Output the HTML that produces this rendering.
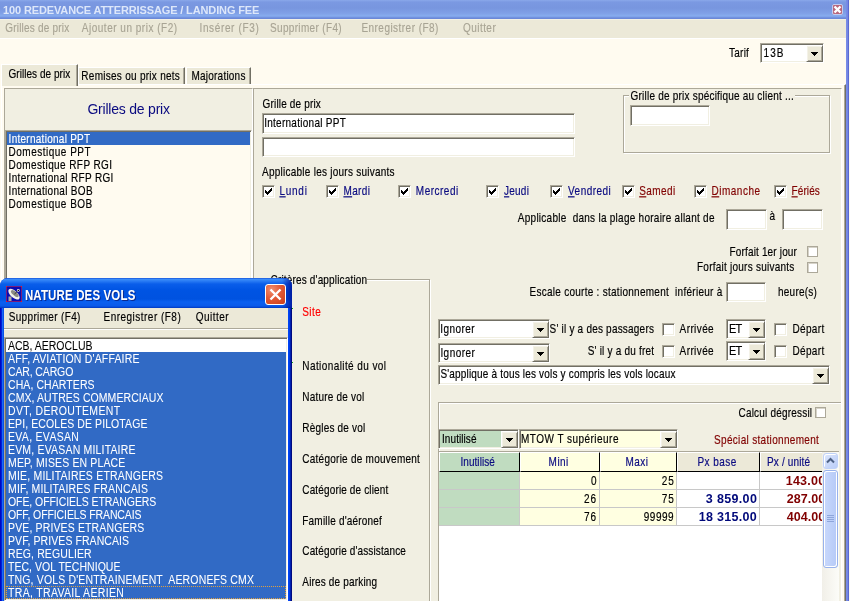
<!DOCTYPE html><html><head><meta charset="utf-8"><style>*{margin:0;padding:0;box-sizing:border-box}
html,body{width:850px;height:601px;overflow:hidden;background:#FFFBF0;position:relative;font-family:"Liberation Sans",sans-serif}
.a{position:absolute}
.sk{position:absolute;border:1px solid;border-color:#ACA899 #FFFFFF #FFFFFF #ACA899;box-shadow:inset 1px 1px 0 #716F64,inset -1px -1px 0 #F1EFE2}
.btn{position:absolute;background:#ECE9D8;border:1px solid;border-color:#FFFFFF #716F64 #716F64 #FFFFFF;box-shadow:inset 1px 1px 0 #F4F2E8,inset -1px -1px 0 #ACA899}
.cb{position:absolute;width:13px;height:13px;background:#fff;border:1px solid;border-color:#ACA899 #FFFFFF #FFFFFF #ACA899;box-shadow:inset 1px 1px 0 #716F64,inset -1px -1px 0 #F1EFE2}
</style></head><body><div style="position:absolute;left:0;top:0;width:850px;height:601px;overflow:hidden;will-change:transform">
<div class="a" style="left:0px;top:0px;width:850px;height:19px;background:linear-gradient(#8AA8EA 0,#7B99E2 2px,#7896DF 8px,#7F9FE6 13px,#87ACEE 16px,#7A9CE6 17px,#6B88D8 18px,#6B88D8 19px)"></div>
<div style="position:absolute;left:3.00px;top:4px;white-space:pre;font:bold 11px/13px 'Liberation Sans',sans-serif;color:#DDE7FA;letter-spacing:-0.128px;-webkit-text-stroke:0.0px #DDE7FA;">100 REDEVANCE ATTERRISSAGE / LANDING FEE</div>
<div class="a" style="left:832px;top:4px;width:11px;height:11px;background:#B8667C;border:1px solid #C4CCEE;border-radius:2px"></div>
<svg class="a" style="left:832px;top:4px" width="11" height="11"><path d="M2.5 2.5L8.5 8.5M8.5 2.5L2.5 8.5" stroke="#fff" stroke-width="2.4"/></svg>
<div class="a" style="left:0px;top:19px;width:846px;height:19px;background:#ECE9D8;border-top:1px solid #F3F0E4"></div>
<div class="a" style="left:0px;top:38px;width:846px;height:1px;background:#FFFFFF"></div>
<div style="position:absolute;left:5.30px;top:22px;white-space:pre;font:10px/13px 'Liberation Sans',sans-serif;color:#A8A494;letter-spacing:0.193px;-webkit-text-stroke:0.12px #A8A494;;transform:scaleY(1.22);transform-origin:0 10px">Grilles de prix</div>
<div style="position:absolute;left:81.80px;top:22px;white-space:pre;font:10px/13px 'Liberation Sans',sans-serif;color:#A8A494;letter-spacing:0.511px;-webkit-text-stroke:0.12px #A8A494;;transform:scaleY(1.22);transform-origin:0 10px">Ajouter un prix (F2)</div>
<div style="position:absolute;left:199.50px;top:22px;white-space:pre;font:10px/13px 'Liberation Sans',sans-serif;color:#A8A494;letter-spacing:0.636px;-webkit-text-stroke:0.12px #A8A494;;transform:scaleY(1.22);transform-origin:0 10px">Insérer (F3)</div>
<div style="position:absolute;left:270.00px;top:22px;white-space:pre;font:10px/13px 'Liberation Sans',sans-serif;color:#A8A494;letter-spacing:0.338px;-webkit-text-stroke:0.12px #A8A494;;transform:scaleY(1.22);transform-origin:0 10px">Supprimer (F4)</div>
<div style="position:absolute;left:361.40px;top:22px;white-space:pre;font:10px/13px 'Liberation Sans',sans-serif;color:#A8A494;letter-spacing:0.467px;-webkit-text-stroke:0.12px #A8A494;;transform:scaleY(1.22);transform-origin:0 10px">Enregistrer (F8)</div>
<div style="position:absolute;left:463.00px;top:22px;white-space:pre;font:10px/13px 'Liberation Sans',sans-serif;color:#A8A494;letter-spacing:0.450px;-webkit-text-stroke:0.12px #A8A494;;transform:scaleY(1.22);transform-origin:0 10px">Quitter</div>
<div class="a" style="left:846px;top:0px;width:3px;height:601px;background:linear-gradient(90deg,#7C8DE6,#7086E4 60%,#4D55C4)"></div>
<div class="a" style="left:849px;top:0px;width:1px;height:601px;background:#F8F7F2"></div>
<div style="position:absolute;left:729.00px;top:47px;white-space:pre;font:10px/13px 'Liberation Sans',sans-serif;color:#000;letter-spacing:0.250px;-webkit-text-stroke:0.15px #000;;transform:scaleY(1.22);transform-origin:0 10px">Tarif</div>
<div class="sk" style="left:760px;top:43px;width:64px;height:20px;background:#fff"></div>
<div style="position:absolute;left:763.60px;top:47px;white-space:pre;font:10px/13px 'Liberation Sans',sans-serif;color:#000;letter-spacing:1.000px;-webkit-text-stroke:0.15px #000;;transform:scaleY(1.22);transform-origin:0 10px">13B</div>
<div class="btn" style="left:806px;top:45px;width:17px;height:17px"></div>
<svg class="a" style="left:811px;top:52px" width="7" height="4"><path d="M0 0h7v1h-1v1h-1v1h-1v1h-1v-1h-1v-1h-1v-1h-1z" fill="#000"/></svg>
<div class="a" style="left:1px;top:84px;width:845px;height:517px;background:#FFFBF0;border-left:1px solid #fff;border-top:1px solid #fff;border-right:1px solid #716F64;box-shadow:inset -1px 0 0 #ACA899"></div>
<div class="a" style="left:78px;top:67px;width:107px;height:17px;background:#ECE9D8;border-left:1px solid #fff;border-top:1px solid #fff;border-right:1px solid #716F64;box-shadow:inset -1px 0 0 #ACA899"></div>
<div class="a" style="left:186px;top:67px;width:65px;height:17px;background:#ECE9D8;border-left:1px solid #fff;border-top:1px solid #fff;border-right:1px solid #716F64;box-shadow:inset -1px 0 0 #ACA899"></div>
<div class="a" style="left:1px;top:64px;width:77px;height:22px;background:#ECE9D8;border-left:1px solid #fff;border-top:1px solid #fff;border-right:1px solid #716F64;box-shadow:inset -1px 0 0 #ACA899"></div>
<div style="position:absolute;left:8.50px;top:68px;white-space:pre;font:10px/13px 'Liberation Sans',sans-serif;color:#000;letter-spacing:0.043px;-webkit-text-stroke:0.15px #000;;transform:scaleY(1.22);transform-origin:0 10px">Grilles de prix</div>
<div style="position:absolute;left:81.30px;top:70px;white-space:pre;font:10px/13px 'Liberation Sans',sans-serif;color:#000;letter-spacing:0.274px;-webkit-text-stroke:0.15px #000;;transform:scaleY(1.22);transform-origin:0 10px">Remises ou prix nets</div>
<div style="position:absolute;left:191.50px;top:70px;white-space:pre;font:10px/13px 'Liberation Sans',sans-serif;color:#000;letter-spacing:0.220px;-webkit-text-stroke:0.15px #000;;transform:scaleY(1.22);transform-origin:0 10px">Majorations</div>
<div class="a" style="left:4px;top:88px;width:249px;height:513px;background:#F1EFE2;border-top:1px solid #ACA899;border-left:1px solid #ACA899;border-right:1px solid #fff"></div>
<div style="position:absolute;left:87.40px;top:101px;white-space:pre;font:14px/17px 'Liberation Sans',sans-serif;color:#0A0A80;letter-spacing:-0.214px;-webkit-text-stroke:0.0px #0A0A80;">Grilles de prix</div>
<div class="sk" style="left:5px;top:130px;width:247px;height:471px;background:#FFFBF0"></div>
<div class="a" style="left:7px;top:132px;width:243px;height:13px;background:#316AC5"></div>
<div style="position:absolute;left:8.60px;top:133px;white-space:pre;font:10px/13px 'Liberation Sans',sans-serif;color:#fff;letter-spacing:0.269px;-webkit-text-stroke:0.15px #fff;;transform:scaleY(1.22);transform-origin:0 10px">International PPT</div>
<div style="position:absolute;left:8.60px;top:146px;white-space:pre;font:10px/13px 'Liberation Sans',sans-serif;color:#000;letter-spacing:0.495px;-webkit-text-stroke:0.15px #000;;transform:scaleY(1.22);transform-origin:0 10px">Domestique PPT</div>
<div style="position:absolute;left:8.60px;top:159px;white-space:pre;font:10px/13px 'Liberation Sans',sans-serif;color:#000;letter-spacing:0.409px;-webkit-text-stroke:0.15px #000;;transform:scaleY(1.22);transform-origin:0 10px">Domestique RFP RGI</div>
<div style="position:absolute;left:8.60px;top:172px;white-space:pre;font:10px/13px 'Liberation Sans',sans-serif;color:#000;letter-spacing:0.330px;-webkit-text-stroke:0.15px #000;;transform:scaleY(1.22);transform-origin:0 10px">International RFP RGI</div>
<div style="position:absolute;left:8.60px;top:185px;white-space:pre;font:10px/13px 'Liberation Sans',sans-serif;color:#000;letter-spacing:0.317px;-webkit-text-stroke:0.15px #000;;transform:scaleY(1.22);transform-origin:0 10px">International BOB</div>
<div style="position:absolute;left:8.60px;top:198px;white-space:pre;font:10px/13px 'Liberation Sans',sans-serif;color:#000;letter-spacing:0.495px;-webkit-text-stroke:0.15px #000;;transform:scaleY(1.22);transform-origin:0 10px">Domestique BOB</div>
<div class="a" style="left:253px;top:88px;width:589px;height:513px;background:#F1EFE2;border-top:1px solid #ACA899;border-left:1px solid #ACA899;border-right:1px solid #fff"></div>
<div style="position:absolute;left:262.60px;top:98px;white-space:pre;font:10px/13px 'Liberation Sans',sans-serif;color:#000;letter-spacing:0.162px;-webkit-text-stroke:0.15px #000;;transform:scaleY(1.22);transform-origin:0 10px">Grille de prix</div>
<div class="sk" style="left:262px;top:113px;width:313px;height:21px;background:#fff"></div>
<div style="position:absolute;left:264.20px;top:117px;white-space:pre;font:10px/13px 'Liberation Sans',sans-serif;color:#000;letter-spacing:0.269px;-webkit-text-stroke:0.15px #000;;transform:scaleY(1.22);transform-origin:0 10px">International PPT</div>
<div class="sk" style="left:262px;top:137px;width:313px;height:20px;background:#fff"></div>
<div class="a" style="left:623px;top:95px;width:207px;height:58px;border:1px solid #ACA899;box-shadow:inset 1px 1px 0 #fff,1px 1px 0 #fff"></div>
<div class="a" style="left:629px;top:90px;width:166px;height:12px;background:#F1EFE2"></div>
<div style="position:absolute;left:630.60px;top:90px;white-space:pre;font:10px/13px 'Liberation Sans',sans-serif;color:#000;letter-spacing:0.211px;-webkit-text-stroke:0.15px #000;;transform:scaleY(1.22);transform-origin:0 10px">Grille de prix spécifique au client ...</div>
<div class="sk" style="left:630px;top:105px;width:80px;height:21px;background:#fff"></div>
<div style="position:absolute;left:262.00px;top:166px;white-space:pre;font:10px/13px 'Liberation Sans',sans-serif;color:#000;letter-spacing:0.250px;-webkit-text-stroke:0.15px #000;;transform:scaleY(1.22);transform-origin:0 10px">Applicable les jours suivants</div>
<div class="cb" style="left:262px;top:185px"></div>
<svg class="a" style="left:265px;top:188px" width="7" height="7"><path d="M0 2h1v1h1v1h1v-1h1v-1h1v-1h1v-1h1v3h-1v1h-1v1h-1v1h-1v1h-1v-1h-1v-1h-1v-1h-1z" fill="#000"/></svg>
<div style="position:absolute;left:279.40px;top:185px;white-space:pre;font:10px/13px 'Liberation Sans',sans-serif;color:#0A0A80;letter-spacing:0.750px;-webkit-text-stroke:0.15px #0A0A80;;transform:scaleY(1.22);transform-origin:0 10px"><span style="text-decoration:underline;text-underline-offset:1px">L</span>undi</div>
<div class="cb" style="left:326px;top:185px"></div>
<svg class="a" style="left:329px;top:188px" width="7" height="7"><path d="M0 2h1v1h1v1h1v-1h1v-1h1v-1h1v-1h1v3h-1v1h-1v1h-1v1h-1v1h-1v-1h-1v-1h-1v-1h-1z" fill="#000"/></svg>
<div style="position:absolute;left:343.40px;top:185px;white-space:pre;font:10px/13px 'Liberation Sans',sans-serif;color:#0A0A80;letter-spacing:0.400px;-webkit-text-stroke:0.15px #0A0A80;;transform:scaleY(1.22);transform-origin:0 10px"><span style="text-decoration:underline;text-underline-offset:1px">M</span>ardi</div>
<div class="cb" style="left:398px;top:185px"></div>
<svg class="a" style="left:401px;top:188px" width="7" height="7"><path d="M0 2h1v1h1v1h1v-1h1v-1h1v-1h1v-1h1v3h-1v1h-1v1h-1v1h-1v1h-1v-1h-1v-1h-1v-1h-1z" fill="#000"/></svg>
<div style="position:absolute;left:415.80px;top:185px;white-space:pre;font:10px/13px 'Liberation Sans',sans-serif;color:#0A0A80;letter-spacing:0.500px;-webkit-text-stroke:0.15px #0A0A80;;transform:scaleY(1.22);transform-origin:0 10px">Mercredi</div>
<div class="cb" style="left:486px;top:185px"></div>
<svg class="a" style="left:489px;top:188px" width="7" height="7"><path d="M0 2h1v1h1v1h1v-1h1v-1h1v-1h1v-1h1v3h-1v1h-1v1h-1v1h-1v1h-1v-1h-1v-1h-1v-1h-1z" fill="#000"/></svg>
<div style="position:absolute;left:504.00px;top:185px;white-space:pre;font:10px/13px 'Liberation Sans',sans-serif;color:#0A0A80;letter-spacing:0.250px;-webkit-text-stroke:0.15px #0A0A80;;transform:scaleY(1.22);transform-origin:0 10px"><span style="text-decoration:underline;text-underline-offset:1px">J</span>eudi</div>
<div class="cb" style="left:550px;top:185px"></div>
<svg class="a" style="left:553px;top:188px" width="7" height="7"><path d="M0 2h1v1h1v1h1v-1h1v-1h1v-1h1v-1h1v3h-1v1h-1v1h-1v1h-1v1h-1v-1h-1v-1h-1v-1h-1z" fill="#000"/></svg>
<div style="position:absolute;left:568.00px;top:185px;white-space:pre;font:10px/13px 'Liberation Sans',sans-serif;color:#0A0A80;letter-spacing:0.471px;-webkit-text-stroke:0.15px #0A0A80;;transform:scaleY(1.22);transform-origin:0 10px"><span style="text-decoration:underline;text-underline-offset:1px">V</span>endredi</div>
<div class="cb" style="left:622px;top:185px"></div>
<svg class="a" style="left:625px;top:188px" width="7" height="7"><path d="M0 2h1v1h1v1h1v-1h1v-1h1v-1h1v-1h1v3h-1v1h-1v1h-1v1h-1v1h-1v-1h-1v-1h-1v-1h-1z" fill="#000"/></svg>
<div style="position:absolute;left:639.20px;top:185px;white-space:pre;font:10px/13px 'Liberation Sans',sans-serif;color:#800000;letter-spacing:0.400px;-webkit-text-stroke:0.15px #800000;;transform:scaleY(1.22);transform-origin:0 10px"><span style="text-decoration:underline;text-underline-offset:1px">S</span>amedi</div>
<div class="cb" style="left:694px;top:185px"></div>
<svg class="a" style="left:697px;top:188px" width="7" height="7"><path d="M0 2h1v1h1v1h1v-1h1v-1h1v-1h1v-1h1v3h-1v1h-1v1h-1v1h-1v1h-1v-1h-1v-1h-1v-1h-1z" fill="#000"/></svg>
<div style="position:absolute;left:711.50px;top:185px;white-space:pre;font:10px/13px 'Liberation Sans',sans-serif;color:#800000;letter-spacing:0.500px;-webkit-text-stroke:0.15px #800000;;transform:scaleY(1.22);transform-origin:0 10px"><span style="text-decoration:underline;text-underline-offset:1px">D</span>imanche</div>
<div class="cb" style="left:774px;top:185px"></div>
<svg class="a" style="left:777px;top:188px" width="7" height="7"><path d="M0 2h1v1h1v1h1v-1h1v-1h1v-1h1v-1h1v3h-1v1h-1v1h-1v1h-1v1h-1v-1h-1v-1h-1v-1h-1z" fill="#000"/></svg>
<div style="position:absolute;left:791.50px;top:185px;white-space:pre;font:10px/13px 'Liberation Sans',sans-serif;color:#800000;letter-spacing:0.100px;-webkit-text-stroke:0.15px #800000;;transform:scaleY(1.22);transform-origin:0 10px"><span style="text-decoration:underline;text-underline-offset:1px">F</span>ériés</div>
<div style="position:absolute;left:517.80px;top:212px;white-space:pre;font:10px/13px 'Liberation Sans',sans-serif;color:#000;letter-spacing:0.262px;-webkit-text-stroke:0.15px #000;;transform:scaleY(1.22);transform-origin:0 10px">Applicable  dans la plage horaire allant de</div>
<div class="sk" style="left:726px;top:209px;width:41px;height:21px;background:#fff"></div>
<div style="position:absolute;left:769.40px;top:210px;white-space:pre;font:10px/13px 'Liberation Sans',sans-serif;color:#000;letter-spacing:0.000px;-webkit-text-stroke:0.15px #000;;transform:scaleY(1.22);transform-origin:0 10px">à</div>
<div class="sk" style="left:782px;top:209px;width:41px;height:21px;background:#fff"></div>
<div style="position:absolute;left:729.50px;top:246px;white-space:pre;font:10px/13px 'Liberation Sans',sans-serif;color:#000;letter-spacing:0.160px;-webkit-text-stroke:0.15px #000;;transform:scaleY(1.22);transform-origin:0 10px">Forfait 1er jour</div>
<div class="a" style="left:807px;top:246px;width:11px;height:11px;background:#fff;border:1px solid #ACA899;box-shadow:inset 1px 1px 0 #D6D3C8"></div>
<div style="position:absolute;left:697.00px;top:261px;white-space:pre;font:10px/13px 'Liberation Sans',sans-serif;color:#000;letter-spacing:0.238px;-webkit-text-stroke:0.15px #000;;transform:scaleY(1.22);transform-origin:0 10px">Forfait jours suivants</div>
<div class="a" style="left:807px;top:262px;width:11px;height:11px;background:#fff;border:1px solid #ACA899;box-shadow:inset 1px 1px 0 #D6D3C8"></div>
<div style="position:absolute;left:529.50px;top:286px;white-space:pre;font:10px/13px 'Liberation Sans',sans-serif;color:#000;letter-spacing:0.268px;-webkit-text-stroke:0.15px #000;;transform:scaleY(1.22);transform-origin:0 10px">Escale courte : stationnement  inférieur à</div>
<div class="sk" style="left:726px;top:282px;width:40px;height:20px;background:#fff"></div>
<div style="position:absolute;left:778.00px;top:286px;white-space:pre;font:10px/13px 'Liberation Sans',sans-serif;color:#000;letter-spacing:0.243px;-webkit-text-stroke:0.15px #000;;transform:scaleY(1.22);transform-origin:0 10px">heure(s)</div>
<div class="a" style="left:265px;top:279px;width:165px;height:330px;border:1px solid #ACA899;box-shadow:inset 1px 1px 0 #fff,1px 1px 0 #fff"></div>
<div class="a" style="left:268px;top:272px;width:99px;height:12px;background:#F1EFE2"></div>
<div style="position:absolute;left:270.60px;top:274px;white-space:pre;font:10px/13px 'Liberation Sans',sans-serif;color:#000;letter-spacing:0.162px;-webkit-text-stroke:0.15px #000;;transform:scaleY(1.22);transform-origin:0 10px">Critères d'application</div>
<div style="position:absolute;left:302.20px;top:306px;white-space:pre;font:10px/13px 'Liberation Sans',sans-serif;color:#FF0000;letter-spacing:0.500px;-webkit-text-stroke:0.15px #FF0000;;transform:scaleY(1.22);transform-origin:0 10px">Site</div>
<div style="position:absolute;left:302.30px;top:360px;white-space:pre;font:10px/13px 'Liberation Sans',sans-serif;color:#000;letter-spacing:0.412px;-webkit-text-stroke:0.15px #000;;transform:scaleY(1.22);transform-origin:0 10px">Nationalité du vol</div>
<div style="position:absolute;left:302.30px;top:391px;white-space:pre;font:10px/13px 'Liberation Sans',sans-serif;color:#000;letter-spacing:0.200px;-webkit-text-stroke:0.15px #000;;transform:scaleY(1.22);transform-origin:0 10px">Nature de vol</div>
<div style="position:absolute;left:302.30px;top:422px;white-space:pre;font:10px/13px 'Liberation Sans',sans-serif;color:#000;letter-spacing:0.200px;-webkit-text-stroke:0.15px #000;;transform:scaleY(1.22);transform-origin:0 10px">Règles de vol</div>
<div style="position:absolute;left:302.30px;top:453px;white-space:pre;font:10px/13px 'Liberation Sans',sans-serif;color:#000;letter-spacing:0.252px;-webkit-text-stroke:0.15px #000;;transform:scaleY(1.22);transform-origin:0 10px">Catégorie de mouvement</div>
<div style="position:absolute;left:302.30px;top:484px;white-space:pre;font:10px/13px 'Liberation Sans',sans-serif;color:#000;letter-spacing:0.144px;-webkit-text-stroke:0.15px #000;;transform:scaleY(1.22);transform-origin:0 10px">Catégorie de client</div>
<div style="position:absolute;left:302.30px;top:515px;white-space:pre;font:10px/13px 'Liberation Sans',sans-serif;color:#000;letter-spacing:0.200px;-webkit-text-stroke:0.15px #000;;transform:scaleY(1.22);transform-origin:0 10px">Famille d'aéronef</div>
<div style="position:absolute;left:302.30px;top:545px;white-space:pre;font:10px/13px 'Liberation Sans',sans-serif;color:#000;letter-spacing:0.129px;-webkit-text-stroke:0.15px #000;;transform:scaleY(1.22);transform-origin:0 10px">Catégorie d'assistance</div>
<div style="position:absolute;left:302.30px;top:576px;white-space:pre;font:10px/13px 'Liberation Sans',sans-serif;color:#000;letter-spacing:0.167px;-webkit-text-stroke:0.15px #000;;transform:scaleY(1.22);transform-origin:0 10px">Aires de parking</div>
<div class="sk" style="left:438px;top:319px;width:112px;height:20px;background:#fff"></div>
<div style="position:absolute;left:440.30px;top:323px;white-space:pre;font:10px/13px 'Liberation Sans',sans-serif;color:#000;letter-spacing:0.450px;-webkit-text-stroke:0.15px #000;;transform:scaleY(1.22);transform-origin:0 10px">Ignorer</div>
<div class="btn" style="left:532px;top:321px;width:17px;height:17px"></div>
<svg class="a" style="left:537px;top:328px" width="7" height="4"><path d="M0 0h7v1h-1v1h-1v1h-1v1h-1v-1h-1v-1h-1v-1h-1z" fill="#000"/></svg>
<div style="position:absolute;left:549.60px;top:323px;white-space:pre;font:10px/13px 'Liberation Sans',sans-serif;color:#000;letter-spacing:0.209px;-webkit-text-stroke:0.15px #000;;transform:scaleY(1.22);transform-origin:0 10px">S' il y a des passagers</div>
<div class="cb" style="left:662px;top:323px"></div>
<div style="position:absolute;left:679.60px;top:323px;white-space:pre;font:10px/13px 'Liberation Sans',sans-serif;color:#000;letter-spacing:0.400px;-webkit-text-stroke:0.15px #000;;transform:scaleY(1.22);transform-origin:0 10px">Arrivée</div>
<div class="sk" style="left:726px;top:319px;width:40px;height:20px;background:#fff"></div>
<div style="position:absolute;left:728.90px;top:323px;white-space:pre;font:11px/13px 'Liberation Sans',sans-serif;color:#000;letter-spacing:-0.800px;-webkit-text-stroke:0.15px #000;transform:scaleY(1.18);transform-origin:0 10px">ET</div>
<div class="btn" style="left:748px;top:321px;width:17px;height:17px"></div>
<svg class="a" style="left:753px;top:328px" width="7" height="4"><path d="M0 0h7v1h-1v1h-1v1h-1v1h-1v-1h-1v-1h-1v-1h-1z" fill="#000"/></svg>
<div class="cb" style="left:774px;top:323px"></div>
<div style="position:absolute;left:792.40px;top:323px;white-space:pre;font:10px/13px 'Liberation Sans',sans-serif;color:#000;letter-spacing:0.360px;-webkit-text-stroke:0.15px #000;;transform:scaleY(1.22);transform-origin:0 10px">Départ</div>
<div class="sk" style="left:438px;top:343px;width:112px;height:20px;background:#fff"></div>
<div style="position:absolute;left:440.40px;top:347px;white-space:pre;font:10px/13px 'Liberation Sans',sans-serif;color:#000;letter-spacing:0.450px;-webkit-text-stroke:0.15px #000;;transform:scaleY(1.22);transform-origin:0 10px">Ignorer</div>
<div class="btn" style="left:532px;top:345px;width:17px;height:17px"></div>
<svg class="a" style="left:537px;top:352px" width="7" height="4"><path d="M0 0h7v1h-1v1h-1v1h-1v1h-1v-1h-1v-1h-1v-1h-1z" fill="#000"/></svg>
<div style="position:absolute;left:587.70px;top:345px;white-space:pre;font:10px/13px 'Liberation Sans',sans-serif;color:#000;letter-spacing:0.206px;-webkit-text-stroke:0.15px #000;;transform:scaleY(1.22);transform-origin:0 10px">S' il y a du fret</div>
<div class="cb" style="left:662px;top:345px"></div>
<div style="position:absolute;left:679.60px;top:345px;white-space:pre;font:10px/13px 'Liberation Sans',sans-serif;color:#000;letter-spacing:0.400px;-webkit-text-stroke:0.15px #000;;transform:scaleY(1.22);transform-origin:0 10px">Arrivée</div>
<div class="sk" style="left:726px;top:341px;width:40px;height:20px;background:#fff"></div>
<div style="position:absolute;left:728.90px;top:345px;white-space:pre;font:11px/13px 'Liberation Sans',sans-serif;color:#000;letter-spacing:-0.800px;-webkit-text-stroke:0.15px #000;transform:scaleY(1.18);transform-origin:0 10px">ET</div>
<div class="btn" style="left:748px;top:343px;width:17px;height:17px"></div>
<svg class="a" style="left:753px;top:350px" width="7" height="4"><path d="M0 0h7v1h-1v1h-1v1h-1v1h-1v-1h-1v-1h-1v-1h-1z" fill="#000"/></svg>
<div class="cb" style="left:774px;top:345px"></div>
<div style="position:absolute;left:792.40px;top:345px;white-space:pre;font:10px/13px 'Liberation Sans',sans-serif;color:#000;letter-spacing:0.360px;-webkit-text-stroke:0.15px #000;;transform:scaleY(1.22);transform-origin:0 10px">Départ</div>
<div class="sk" style="left:438px;top:365px;width:392px;height:20px;background:#fff"></div>
<div style="position:absolute;left:440.40px;top:368px;white-space:pre;font:10px/13px 'Liberation Sans',sans-serif;color:#000;letter-spacing:0.181px;-webkit-text-stroke:0.15px #000;;transform:scaleY(1.22);transform-origin:0 10px">S'applique à tous les vols y compris les vols locaux</div>
<div class="btn" style="left:812px;top:367px;width:17px;height:17px"></div>
<svg class="a" style="left:817px;top:374px" width="7" height="4"><path d="M0 0h7v1h-1v1h-1v1h-1v1h-1v-1h-1v-1h-1v-1h-1z" fill="#000"/></svg>
<div class="a" style="left:438px;top:402px;width:403px;height:199px;border-top:1px solid #ACA899;border-left:1px solid #ACA899;box-shadow:inset 1px 1px 0 #fff"></div>
<div style="position:absolute;left:738.50px;top:407px;white-space:pre;font:10px/13px 'Liberation Sans',sans-serif;color:#000;letter-spacing:0.200px;-webkit-text-stroke:0.15px #000;;transform:scaleY(1.22);transform-origin:0 10px">Calcul dégressil</div>
<div class="a" style="left:815px;top:407px;width:11px;height:11px;background:#fff;border:1px solid #ACA899;box-shadow:inset 1px 1px 0 #D6D3C8"></div>
<div class="sk" style="left:438px;top:429px;width:81px;height:20px;background:#C0DCC0"></div>
<div style="position:absolute;left:442.00px;top:433px;white-space:pre;font:10px/13px 'Liberation Sans',sans-serif;color:#000;letter-spacing:0.075px;-webkit-text-stroke:0.15px #000;;transform:scaleY(1.22);transform-origin:0 10px">Inutilisé</div>
<div class="btn" style="left:501px;top:431px;width:17px;height:17px"></div>
<svg class="a" style="left:506px;top:438px" width="7" height="4"><path d="M0 0h7v1h-1v1h-1v1h-1v1h-1v-1h-1v-1h-1v-1h-1z" fill="#000"/></svg>
<div class="sk" style="left:519px;top:429px;width:159px;height:20px;background:#FFFFE1"></div>
<div style="position:absolute;left:521.00px;top:433px;white-space:pre;font:10px/13px 'Liberation Sans',sans-serif;color:#000;letter-spacing:0.463px;-webkit-text-stroke:0.15px #000;;transform:scaleY(1.22);transform-origin:0 10px">MTOW T supérieure</div>
<div class="btn" style="left:660px;top:431px;width:17px;height:17px"></div>
<svg class="a" style="left:665px;top:438px" width="7" height="4"><path d="M0 0h7v1h-1v1h-1v1h-1v1h-1v-1h-1v-1h-1v-1h-1z" fill="#000"/></svg>
<div style="position:absolute;left:714.00px;top:434px;white-space:pre;font:10px/13px 'Liberation Sans',sans-serif;color:#800000;letter-spacing:0.325px;-webkit-text-stroke:0.15px #800000;;transform:scaleY(1.22);transform-origin:0 10px">Spécial stationnement</div>
<div class="a" style="left:438px;top:451px;width:401px;height:150px;background:#fff;border-top:1px solid #ACA899;border-left:1px solid #ACA899"></div>
<div class="a" style="left:439px;top:452px;width:81px;height:20px;background:#C0DCC0;border-left:1px solid #fff;border-top:1px solid #fff;border-right:1px solid #000;border-bottom:1px solid #000"></div>
<div class="a" style="left:520px;top:452px;width:80px;height:20px;background:#FFFFE1;border-left:1px solid #fff;border-top:1px solid #fff;border-right:1px solid #000;border-bottom:1px solid #000"></div>
<div class="a" style="left:600px;top:452px;width:77px;height:20px;background:#FFFFE1;border-left:1px solid #fff;border-top:1px solid #fff;border-right:1px solid #000;border-bottom:1px solid #000"></div>
<div class="a" style="left:677px;top:452px;width:83px;height:20px;background:#ECE9D8;border-left:1px solid #fff;border-top:1px solid #fff;border-right:1px solid #000;border-bottom:1px solid #000"></div>
<div class="a" style="left:760px;top:452px;width:63px;height:20px;background:#ECE9D8;border-left:1px solid #fff;border-top:1px solid #fff;border-right:1px solid #000;border-bottom:1px solid #000"></div>
<div style="position:absolute;left:460.40px;top:456px;white-space:pre;font:10px/13px 'Liberation Sans',sans-serif;color:#0A0A80;letter-spacing:0.075px;-webkit-text-stroke:0.15px #0A0A80;;transform:scaleY(1.22);transform-origin:0 10px">Inutilisé</div>
<div style="position:absolute;left:548.60px;top:456px;white-space:pre;font:10px/13px 'Liberation Sans',sans-serif;color:#0A0A80;letter-spacing:0.467px;-webkit-text-stroke:0.15px #0A0A80;;transform:scaleY(1.22);transform-origin:0 10px">Mini</div>
<div style="position:absolute;left:625.50px;top:456px;white-space:pre;font:10px/13px 'Liberation Sans',sans-serif;color:#0A0A80;letter-spacing:0.467px;-webkit-text-stroke:0.15px #0A0A80;;transform:scaleY(1.22);transform-origin:0 10px">Maxi</div>
<div style="position:absolute;left:697.40px;top:456px;white-space:pre;font:10px/13px 'Liberation Sans',sans-serif;color:#0A0A80;letter-spacing:0.467px;-webkit-text-stroke:0.15px #0A0A80;;transform:scaleY(1.22);transform-origin:0 10px">Px base</div>
<div style="position:absolute;left:767.00px;top:456px;white-space:pre;font:10px/13px 'Liberation Sans',sans-serif;color:#0A0A80;letter-spacing:0.144px;-webkit-text-stroke:0.15px #0A0A80;;transform:scaleY(1.22);transform-origin:0 10px">Px / unité</div>
<div class="a" style="left:439px;top:472px;width:81px;height:18px;background:#C0DCC0;border-right:1px solid #C8C8C8;border-bottom:1px solid #C8C8C8"></div>
<div class="a" style="left:520px;top:472px;width:80px;height:18px;background:#FFFFE1;border-right:1px solid #C8C8C8;border-bottom:1px solid #C8C8C8"></div>
<div class="a" style="left:600px;top:472px;width:77px;height:18px;background:#FFFFE1;border-right:1px solid #C8C8C8;border-bottom:1px solid #C8C8C8"></div>
<div class="a" style="left:677px;top:472px;width:83px;height:18px;background:#fff;border-right:1px solid #C8C8C8;border-bottom:1px solid #C8C8C8"></div>
<div class="a" style="left:760px;top:472px;width:63px;height:18px;background:#fff;border-right:1px solid #C8C8C8;border-bottom:1px solid #C8C8C8"></div>
<div style="position:absolute;left:591.00px;top:475px;white-space:pre;font:10px/13px 'Liberation Sans',sans-serif;color:#000;letter-spacing:0.000px;-webkit-text-stroke:0.15px #000;;transform:scaleY(1.22);transform-origin:0 10px">0</div>
<div style="position:absolute;left:661.80px;top:475px;white-space:pre;font:10px/13px 'Liberation Sans',sans-serif;color:#000;letter-spacing:1.000px;-webkit-text-stroke:0.15px #000;;transform:scaleY(1.22);transform-origin:0 10px">25</div>
<div style="position:absolute;left:760px;top:472px;width:62px;height:68px;overflow:hidden"><div style="position:absolute;left:-760px;top:-472px;width:850px;height:601px"><div style="position:absolute;left:785.80px;top:474px;white-space:pre;font:bold 12.5px/15px 'Liberation Sans',sans-serif;color:#800000;letter-spacing:0.210px;-webkit-text-stroke:0.0px #800000;">143.00</div></div></div>
<div class="a" style="left:439px;top:490px;width:81px;height:18px;background:#C0DCC0;border-right:1px solid #C8C8C8;border-bottom:1px solid #C8C8C8"></div>
<div class="a" style="left:520px;top:490px;width:80px;height:18px;background:#FFFFE1;border-right:1px solid #C8C8C8;border-bottom:1px solid #C8C8C8"></div>
<div class="a" style="left:600px;top:490px;width:77px;height:18px;background:#FFFFE1;border-right:1px solid #C8C8C8;border-bottom:1px solid #C8C8C8"></div>
<div class="a" style="left:677px;top:490px;width:83px;height:18px;background:#fff;border-right:1px solid #C8C8C8;border-bottom:1px solid #C8C8C8"></div>
<div class="a" style="left:760px;top:490px;width:63px;height:18px;background:#fff;border-right:1px solid #C8C8C8;border-bottom:1px solid #C8C8C8"></div>
<div style="position:absolute;left:584.00px;top:493px;white-space:pre;font:10px/13px 'Liberation Sans',sans-serif;color:#000;letter-spacing:1.000px;-webkit-text-stroke:0.15px #000;;transform:scaleY(1.22);transform-origin:0 10px">26</div>
<div style="position:absolute;left:661.80px;top:493px;white-space:pre;font:10px/13px 'Liberation Sans',sans-serif;color:#000;letter-spacing:1.000px;-webkit-text-stroke:0.15px #000;;transform:scaleY(1.22);transform-origin:0 10px">75</div>
<div style="position:absolute;left:705.80px;top:492px;white-space:pre;font:bold 12.5px/15px 'Liberation Sans',sans-serif;color:#00087A;letter-spacing:0.343px;-webkit-text-stroke:0.0px #00087A;">3 859.00</div>
<div style="position:absolute;left:760px;top:472px;width:62px;height:68px;overflow:hidden"><div style="position:absolute;left:-760px;top:-472px;width:850px;height:601px"><div style="position:absolute;left:786.80px;top:492px;white-space:pre;font:bold 12.5px/15px 'Liberation Sans',sans-serif;color:#800000;letter-spacing:0.010px;-webkit-text-stroke:0.0px #800000;">287.00</div></div></div>
<div class="a" style="left:439px;top:508px;width:81px;height:18px;background:#C0DCC0;border-right:1px solid #C8C8C8;border-bottom:1px solid #C8C8C8"></div>
<div class="a" style="left:520px;top:508px;width:80px;height:18px;background:#FFFFE1;border-right:1px solid #C8C8C8;border-bottom:1px solid #C8C8C8"></div>
<div class="a" style="left:600px;top:508px;width:77px;height:18px;background:#FFFFE1;border-right:1px solid #C8C8C8;border-bottom:1px solid #C8C8C8"></div>
<div class="a" style="left:677px;top:508px;width:83px;height:18px;background:#fff;border-right:1px solid #C8C8C8;border-bottom:1px solid #C8C8C8"></div>
<div class="a" style="left:760px;top:508px;width:63px;height:18px;background:#fff;border-right:1px solid #C8C8C8;border-bottom:1px solid #C8C8C8"></div>
<div style="position:absolute;left:584.00px;top:511px;white-space:pre;font:10px/13px 'Liberation Sans',sans-serif;color:#000;letter-spacing:1.000px;-webkit-text-stroke:0.15px #000;;transform:scaleY(1.22);transform-origin:0 10px">76</div>
<div style="position:absolute;left:643.80px;top:511px;white-space:pre;font:10px/13px 'Liberation Sans',sans-serif;color:#000;letter-spacing:0.500px;-webkit-text-stroke:0.15px #000;;transform:scaleY(1.22);transform-origin:0 10px">99999</div>
<div style="position:absolute;left:698.80px;top:510px;white-space:pre;font:bold 12.5px/15px 'Liberation Sans',sans-serif;color:#00087A;letter-spacing:0.300px;-webkit-text-stroke:0.0px #00087A;">18 315.00</div>
<div style="position:absolute;left:760px;top:472px;width:62px;height:68px;overflow:hidden"><div style="position:absolute;left:-760px;top:-472px;width:850px;height:601px"><div style="position:absolute;left:786.80px;top:510px;white-space:pre;font:bold 12.5px/15px 'Liberation Sans',sans-serif;color:#800000;letter-spacing:0.010px;-webkit-text-stroke:0.0px #800000;">404.00</div></div></div>
<div class="a" style="left:822px;top:452px;width:17px;height:149px;background:linear-gradient(90deg,#F1EFE8,#FCFCF8)"></div>
<div class="a" style="left:823px;top:453px;width:15px;height:16px;background:linear-gradient(135deg,#DCE6FC,#BACDF8);border:1px solid #C0D2F8;border-radius:3px;box-shadow:inset 1px 1px 0 #fff"></div>
<svg class="a" style="left:826px;top:457px" width="9" height="7"><path d="M1 5.5L4.5 2L8 5.5" stroke="#4D6185" stroke-width="2" fill="none"/></svg>
<div class="a" style="left:823px;top:470px;width:15px;height:98px;background:linear-gradient(90deg,#C8D8FC,#B6CAF7);border:1px solid #98B2EC;border-radius:3px;box-shadow:inset 1px 1px 0 #fff,inset -1px -1px 0 #fff"></div>
<div class="a" style="left:827px;top:515px;width:7px;height:1px;background:#8EA6DB"></div>
<div class="a" style="left:827px;top:517px;width:7px;height:1px;background:#8EA6DB"></div>
<div class="a" style="left:827px;top:519px;width:7px;height:1px;background:#8EA6DB"></div>
<div class="a" style="left:827px;top:521px;width:7px;height:1px;background:#8EA6DB"></div>
<div class="a" style="left:292px;top:308px;width:1px;height:1px;background:#10A010"></div>
<div class="a" style="left:292px;top:362px;width:1px;height:1px;background:#10A010"></div>
<div class="a" style="left:0px;top:278px;width:292px;height:323px;background:#0030D0;border-radius:8px 8px 0 0"></div>
<div class="a" style="left:0px;top:278px;width:292px;height:30px;border-radius:8px 8px 0 0;background:linear-gradient(#0A3FD0 0,#3D90FA 1px,#2A7CF4 3px,#0A5EEA 6px,#0054E3 12px,#0052E0 21px,#0A60F0 24px,#0A5AEA 28px,#0038C0 30px)"></div>
<div class="a" style="left:0px;top:278px;width:292px;height:30px;border-radius:8px 8px 0 0;background:linear-gradient(90deg,rgba(0,10,140,0) 0,rgba(0,10,140,0) 282px,rgba(0,10,140,.75) 292px)"></div>
<div class="a" style="left:0px;top:308px;width:4px;height:293px;background:linear-gradient(90deg,#0008C0 0,#0008C0 1px,#0020D8 1px,#0020D8 2px,#1A68F6 2px,#1A68F6 3px,#0A52E8 3px)"></div>
<div class="a" style="left:288px;top:308px;width:4px;height:293px;background:linear-gradient(90deg,#0044F4 0,#0044F4 1px,#003CE6 1px,#003CE6 2px,#0020B0 2px,#0020B0 3px,#000A80 3px)"></div>
<svg class="a" style="left:6px;top:286px" width="16" height="16" viewBox="0 0 16 16"><rect x="0.5" y="0.5" width="15" height="15" fill="#0A0AB0" stroke="#7A1C7A"/><rect x="0" y="0" width="1" height="1" fill="#E02020"/><rect x="15" y="0" width="1" height="1" fill="#E02020"/><rect x="0" y="15" width="1" height="1" fill="#E02020"/><rect x="15" y="15" width="1" height="1" fill="#E02020"/><rect x="2.5" y="10.5" width="3" height="4.5" fill="#A8A8A0"/><ellipse cx="8" cy="8.2" rx="7" ry="3.4" transform="rotate(42 8 8.2)" fill="#F2F2EA"/><ellipse cx="8.8" cy="7.6" rx="4.8" ry="2" transform="rotate(42 8.8 7.6)" fill="#8C8C84"/><path d="M8.5 8L12.2 4.5" stroke="#303030" stroke-width="1"/><circle cx="12.3" cy="4.4" r="1.4" fill="#F0F0F0"/><circle cx="12.3" cy="4.4" r="0.7" fill="#000"/></svg>
<div style="position:absolute;left:24.90px;top:290px;white-space:pre;font:bold 11.5px/13px 'Liberation Sans',sans-serif;color:#fff;letter-spacing:0.143px;-webkit-text-stroke:0.0px #fff;transform:scaleY(1.24);transform-origin:0 10px;text-shadow:1px 1px 0 #0A2A90">NATURE DES VOLS</div>
<div class="a" style="left:265px;top:284px;width:21px;height:21px;border:1px solid #fff;border-radius:3px;background:radial-gradient(circle at 30% 25%,#F09070 0,#E25A36 45%,#CC3E18 100%)"></div>
<svg class="a" style="left:265px;top:284px" width="21" height="21"><path d="M5.5 5.5L15.5 15.5M15.5 5.5L5.5 15.5" stroke="#fff" stroke-width="2.4"/></svg>
<div class="a" style="left:4px;top:308px;width:284px;height:20px;background:#ECE9D8"></div>
<div style="position:absolute;left:8.70px;top:311px;white-space:pre;font:10px/13px 'Liberation Sans',sans-serif;color:#000;letter-spacing:0.346px;-webkit-text-stroke:0.15px #000;;transform:scaleY(1.22);transform-origin:0 10px">Supprimer (F4)</div>
<div style="position:absolute;left:103.50px;top:311px;white-space:pre;font:10px/13px 'Liberation Sans',sans-serif;color:#000;letter-spacing:0.480px;-webkit-text-stroke:0.15px #000;;transform:scaleY(1.22);transform-origin:0 10px">Enregistrer (F8)</div>
<div style="position:absolute;left:195.80px;top:311px;white-space:pre;font:10px/13px 'Liberation Sans',sans-serif;color:#000;letter-spacing:0.483px;-webkit-text-stroke:0.15px #000;;transform:scaleY(1.22);transform-origin:0 10px">Quitter</div>
<div class="a" style="left:4px;top:328px;width:284px;height:1px;background:#ACA899"></div>
<div class="a" style="left:4px;top:329px;width:284px;height:1px;background:#fff"></div>
<div class="a" style="left:4px;top:330px;width:284px;height:8px;background:#ECE9D8"></div>
<div class="sk" style="left:4px;top:337px;width:284px;height:264px;background:#fff"></div>
<div class="a" style="left:6px;top:352px;width:280px;height:247px;background:#316AC5"></div>
<div style="position:absolute;left:8.00px;top:340px;white-space:pre;font:10.5px/13px 'Liberation Sans',sans-serif;color:#000;letter-spacing:-0.008px;-webkit-text-stroke:0.05px #000;transform:scaleY(1.24);transform-origin:0 10px">ACB, AEROCLUB</div>
<div style="position:absolute;left:8.00px;top:353px;white-space:pre;font:10.5px/13px 'Liberation Sans',sans-serif;color:#fff;letter-spacing:0.173px;-webkit-text-stroke:0.05px #fff;transform:scaleY(1.24);transform-origin:0 10px">AFF, AVIATION D'AFFAIRE</div>
<div style="position:absolute;left:8.00px;top:366px;white-space:pre;font:10.5px/13px 'Liberation Sans',sans-serif;color:#fff;letter-spacing:-0.133px;-webkit-text-stroke:0.05px #fff;transform:scaleY(1.24);transform-origin:0 10px">CAR, CARGO</div>
<div style="position:absolute;left:8.00px;top:379px;white-space:pre;font:10.5px/13px 'Liberation Sans',sans-serif;color:#fff;letter-spacing:0.083px;-webkit-text-stroke:0.05px #fff;transform:scaleY(1.24);transform-origin:0 10px">CHA, CHARTERS</div>
<div style="position:absolute;left:8.00px;top:392px;white-space:pre;font:10.5px/13px 'Liberation Sans',sans-serif;color:#fff;letter-spacing:0.068px;-webkit-text-stroke:0.05px #fff;transform:scaleY(1.24);transform-origin:0 10px">CMX, AUTRES COMMERCIAUX</div>
<div style="position:absolute;left:8.00px;top:405px;white-space:pre;font:10.5px/13px 'Liberation Sans',sans-serif;color:#fff;letter-spacing:0.360px;-webkit-text-stroke:0.05px #fff;transform:scaleY(1.24);transform-origin:0 10px">DVT, DEROUTEMENT</div>
<div style="position:absolute;left:8.00px;top:418px;white-space:pre;font:10.5px/13px 'Liberation Sans',sans-serif;color:#fff;letter-spacing:0.086px;-webkit-text-stroke:0.05px #fff;transform:scaleY(1.24);transform-origin:0 10px">EPI, ECOLES DE PILOTAGE</div>
<div style="position:absolute;left:8.00px;top:431px;white-space:pre;font:10.5px/13px 'Liberation Sans',sans-serif;color:#fff;letter-spacing:0.300px;-webkit-text-stroke:0.05px #fff;transform:scaleY(1.24);transform-origin:0 10px">EVA, EVASAN</div>
<div style="position:absolute;left:8.00px;top:444px;white-space:pre;font:10.5px/13px 'Liberation Sans',sans-serif;color:#fff;letter-spacing:0.180px;-webkit-text-stroke:0.05px #fff;transform:scaleY(1.24);transform-origin:0 10px">EVM, EVASAN MILITAIRE</div>
<div style="position:absolute;left:8.00px;top:457px;white-space:pre;font:10.5px/13px 'Liberation Sans',sans-serif;color:#fff;letter-spacing:0.144px;-webkit-text-stroke:0.05px #fff;transform:scaleY(1.24);transform-origin:0 10px">MEP, MISES EN PLACE</div>
<div style="position:absolute;left:8.00px;top:470px;white-space:pre;font:10.5px/13px 'Liberation Sans',sans-serif;color:#fff;letter-spacing:0.200px;-webkit-text-stroke:0.05px #fff;transform:scaleY(1.24);transform-origin:0 10px">MIE, MILITAIRES ETRANGERS</div>
<div style="position:absolute;left:8.00px;top:483px;white-space:pre;font:10.5px/13px 'Liberation Sans',sans-serif;color:#fff;letter-spacing:0.157px;-webkit-text-stroke:0.05px #fff;transform:scaleY(1.24);transform-origin:0 10px">MIF, MILITAIRES FRANCAIS</div>
<div style="position:absolute;left:8.00px;top:496px;white-space:pre;font:10.5px/13px 'Liberation Sans',sans-serif;color:#fff;letter-spacing:-0.070px;-webkit-text-stroke:0.05px #fff;transform:scaleY(1.24);transform-origin:0 10px">OFE, OFFICIELS ETRANGERS</div>
<div style="position:absolute;left:8.00px;top:509px;white-space:pre;font:10.5px/13px 'Liberation Sans',sans-serif;color:#fff;letter-spacing:-0.109px;-webkit-text-stroke:0.05px #fff;transform:scaleY(1.24);transform-origin:0 10px">OFF, OFFICIELS FRANCAIS</div>
<div style="position:absolute;left:8.00px;top:522px;white-space:pre;font:10.5px/13px 'Liberation Sans',sans-serif;color:#fff;letter-spacing:0.135px;-webkit-text-stroke:0.05px #fff;transform:scaleY(1.24);transform-origin:0 10px">PVE, PRIVES ETRANGERS</div>
<div style="position:absolute;left:8.00px;top:535px;white-space:pre;font:10.5px/13px 'Liberation Sans',sans-serif;color:#fff;letter-spacing:0.079px;-webkit-text-stroke:0.05px #fff;transform:scaleY(1.24);transform-origin:0 10px">PVF, PRIVES FRANCAIS</div>
<div style="position:absolute;left:8.00px;top:548px;white-space:pre;font:10.5px/13px 'Liberation Sans',sans-serif;color:#fff;letter-spacing:0.117px;-webkit-text-stroke:0.05px #fff;transform:scaleY(1.24);transform-origin:0 10px">REG, REGULIER</div>
<div style="position:absolute;left:8.00px;top:561px;white-space:pre;font:10.5px/13px 'Liberation Sans',sans-serif;color:#fff;letter-spacing:0.024px;-webkit-text-stroke:0.05px #fff;transform:scaleY(1.24);transform-origin:0 10px">TEC, VOL TECHNIQUE</div>
<div style="position:absolute;left:8.00px;top:574px;white-space:pre;font:10.5px/13px 'Liberation Sans',sans-serif;color:#fff;letter-spacing:0.149px;-webkit-text-stroke:0.05px #fff;transform:scaleY(1.24);transform-origin:0 10px">TNG, VOLS D'ENTRAINEMENT  AERONEFS CMX</div>
<div style="position:absolute;left:8.00px;top:587px;white-space:pre;font:10.5px/13px 'Liberation Sans',sans-serif;color:#fff;letter-spacing:0.328px;-webkit-text-stroke:0.05px #fff;transform:scaleY(1.24);transform-origin:0 10px">TRA, TRAVAIL AERIEN</div>
<div class="a" style="left:6px;top:586px;width:280px;height:13px;border:1px dotted #E0A040"></div>
</div></body></html>
